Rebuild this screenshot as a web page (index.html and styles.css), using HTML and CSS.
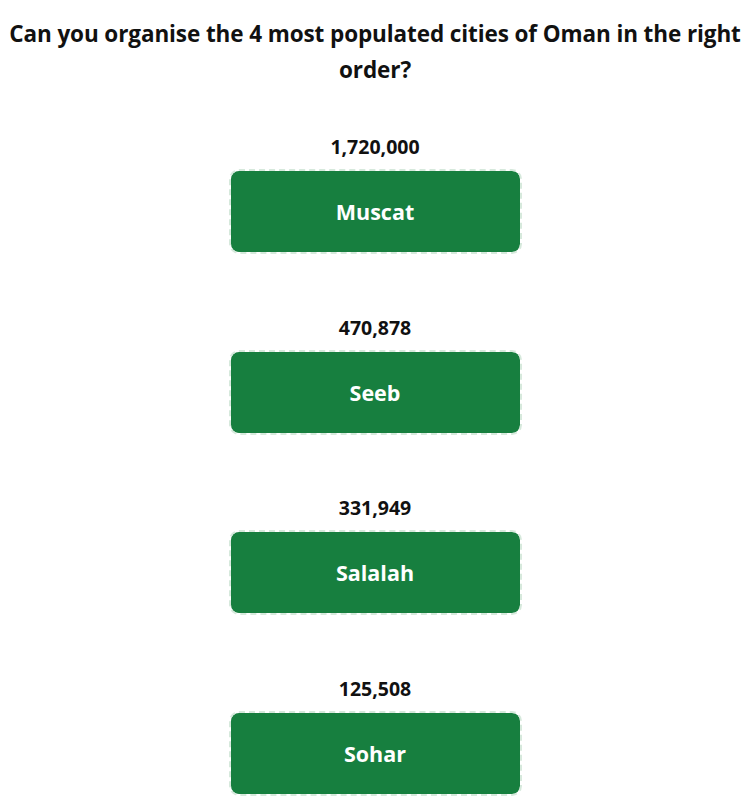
FILE: index.html
```html
<!DOCTYPE html>
<html lang="en">
<head>
<meta charset="utf-8">
<title>Oman cities</title>
<link rel="stylesheet" href="styles.css">
</head>
<body>
<main class="quiz">
  <h1 class="question">Can you organise the 4 most populated cities of Oman in the right order?</h1>
  <ol class="cities">
    <li class="city">
      <div class="population">1,720,000</div>
      <div class="card">Muscat</div>
    </li>
    <li class="city">
      <div class="population">470,878</div>
      <div class="card">Seeb</div>
    </li>
    <li class="city">
      <div class="population">331,949</div>
      <div class="card">Salalah</div>
    </li>
    <li class="city">
      <div class="population">125,508</div>
      <div class="card">Sohar</div>
    </li>
  </ol>
</main>
</body>
</html>
```
FILE: styles.css
```css
html, body {
  margin: 0;
  padding: 0;
  background: #ffffff;
}
body {
  font-family: "Open Sans", "Noto Sans", sans-serif;
  color: #111111;
}
.quiz {
  display: flex;
  flex-direction: column;
  align-items: center;
  padding: 16px 2px 0;
}
.question {
  margin: 0;
  font-size: 22.5px;
  line-height: 36px;
  font-weight: 700;
  text-align: center;
  letter-spacing: -0.1px;
}
.cities {
  list-style: none;
  margin: 47px 0 0;
  padding: 0;
  display: flex;
  flex-direction: column;
  gap: 61.5px;
  align-items: center;
}
.city {
  display: flex;
  flex-direction: column;
  align-items: center;
  gap: 10px;
}
.population {
  font-size: 19.5px;
  line-height: 24px;
  font-weight: 700;
}
.card {
  box-sizing: border-box;
  width: 293px;
  height: 85px;
  border: 2px dashed #d6e9dc;
  border-radius: 10px;
  background: #177f3f;
  background-clip: padding-box;
  color: #ffffff;
  font-size: 21.5px;
  font-weight: 700;
  display: flex;
  align-items: center;
  justify-content: center;
}
```
